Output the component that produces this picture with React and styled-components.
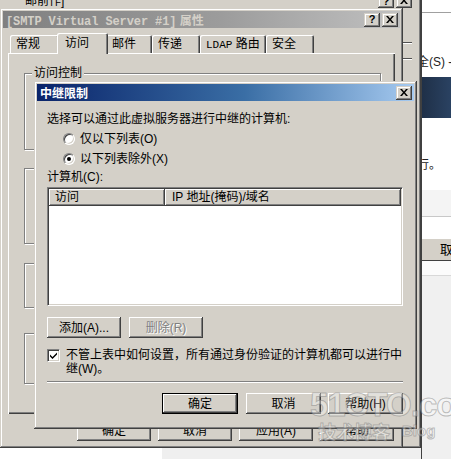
import React from 'react';
import styled, { createGlobalStyle, css } from 'styled-components';

const FONT = `"Liberation Sans", "Noto Sans CJK SC", sans-serif`;

const Global = createGlobalStyle`
  html, body { margin: 0; padding: 0; }
  body { font-family: ${FONT}; font-size: 12px; color: #000; }
  * { box-sizing: border-box; }
`;

const raised = css`
  background: #d4d0c8;
  box-shadow: inset -1px -1px 0 #404040, inset 1px 1px 0 #d4d0c8,
    inset -2px -2px 0 #808080, inset 2px 2px 0 #ffffff;
`;

const Desktop = styled.div`
  position: relative;
  width: 451px;
  height: 459px;
  overflow: hidden;
  background: linear-gradient(to right, #ffffff 162px, #efefef 162px);
`;

const Layer = styled.div`
  position: absolute;
  left: ${(p) => p.$x}px;
  top: ${(p) => p.$y}px;
  width: ${(p) => p.$w}px;
  height: ${(p) => p.$h}px;
`;

/* ---------- back window ---------- */
const BackWin = styled(Layer)`
  ${raised};
  display: flex;
  flex-direction: column;
  padding: 2px 9px 2px 2px;
`;
const BackTop = styled.div`
  height: 14px;
  display: flex;
  align-items: center;
  justify-content: space-between;
  padding-left: 27px;
  line-height: 14px;
`;
const BackRule = styled.div`
  margin-top: ${(p) => p.$mt}px;
  height: 2px;
  border-top: 1px solid #505050;
  border-bottom: 1px solid #ffffff;
`;

/* ---------- right window ---------- */
const RightWin = styled(Layer)`
  background: #ffffff;
  display: flex;
  flex-direction: column;
  overflow: hidden;
  border-left: 1px solid #404040;
`;
const Strip = styled.div`
  flex: none;
  height: ${(p) => p.$h}px;
  background: ${(p) => p.$bg || '#ffffff'};
  border-bottom: ${(p) => (p.$line ? `1px solid ${p.$line}` : 'none')};
  padding-top: ${(p) => p.$pt || 0}px;
  line-height: 14px;
  white-space: nowrap;
`;
const Clip = styled.span`
  display: inline-block;
  margin-left: ${(p) => p.$ml}px;
  color: #222;
`;
const SideBtn = styled.div`
  flex: none;
  height: 23px;
  background: #d4d0c8;
  border-top: 1px solid #ffffff;
  border-bottom: 1px solid #404040;
  padding-left: 18px;
  line-height: 21px;
  font-size: 13px;
  white-space: nowrap;
`;

/* ---------- generic window bits ---------- */
const Win = styled(Layer)`
  ${raised};
  display: flex;
  flex-direction: column;
  padding: 3px 3px 2px 3px;
`;
const TitleBar = styled.div`
  flex: none;
  height: 17px;
  display: flex;
  align-items: center;
  padding: 0 2px 0 3px;
  font-weight: bold;
  white-space: nowrap;
  color: ${(p) => (p.$active ? '#ffffff' : '#d4d0c8')};
  background: ${(p) =>
    p.$active
      ? 'linear-gradient(to right, #0a246a 0%, #3a6ea5 55%, #a6caf0 100%)'
      : 'linear-gradient(to right, #808080 0%, #9c9c9c 55%, #c0c0c0 100%)'};
`;
const TitleMono = styled.span`
  font-family: "Liberation Mono", "Noto Sans CJK SC", monospace;
  font-size: 12px;
  letter-spacing: -0.1px;
`;
const TitleText = styled.span`
  flex: 1;
  font-size: 12px;
`;
const CapGroup = styled.div`
  display: flex;
  gap: 2px;
`;
const CapBtn = styled.div`
  ${raised};
  width: 16px;
  height: 14px;
  display: flex;
  align-items: center;
  justify-content: center;
  padding-bottom: 1px;
  color: #000;
  font-weight: bold;
  font-size: 11px;
  line-height: 12px;
`;
const XIcon = () => (
  <svg width="8" height="7" viewBox="0 0 8 7">
    <path d="M0 0h2l2 2.4L6 0h2L5 3.5 8 7H6L4 4.6 2 7H0l3-3.5z" fill="#000" />
  </svg>
);

/* ---------- buttons ---------- */
const Btn = styled.div`
  flex: none;
  width: ${(p) => p.$w || 75}px;
  height: ${(p) => p.$h || 21}px;
  display: flex;
  align-items: center;
  justify-content: center;
  white-space: nowrap;
  background: #d4d0c8;
  font-size: 12px;
  color: ${(p) => (p.$disabled ? '#808080' : '#000')};
  text-shadow: ${(p) => (p.$disabled ? '1px 1px 0 #ffffff' : 'none')};
  box-shadow: ${(p) =>
    p.$default
      ? 'inset 0 0 0 1px #000, inset -2px -2px 0 #404040, inset 2px 2px 0 #ffffff, inset -3px -3px 0 #808080'
      : 'inset -1px -1px 0 #404040, inset 1px 1px 0 #ffffff, inset -2px -2px 0 #808080'};
`;

/* ---------- SMTP window ---------- */
const TabStrip = styled.div`
  flex: none;
  display: flex;
  align-items: flex-end;
  height: 20px;
  margin: 5px 0 0 7px;
`;
const Tab = styled.div`
  flex: none;
  width: ${(p) => p.$w}px;
  height: ${(p) => (p.$sel ? 21 : 18)}px;
  margin: ${(p) => (p.$sel ? '0 -2px -1px -2px' : '0')};
  padding-left: ${(p) => (p.$sel ? 8 : 6)}px;
  padding-top: ${(p) => (p.$sel ? 3 : 2)}px;
  line-height: 14px;
  white-space: nowrap;
  background: #d4d0c8;
  border-radius: 2px 2px 0 0;
  position: ${(p) => (p.$sel ? 'relative' : 'static')};
  z-index: ${(p) => (p.$sel ? 2 : 'auto')};
  box-shadow: inset 1px 1px 0 #ffffff, inset -1px 0 0 #404040,
    inset -2px 0 0 #808080;
`;
const TabMono = styled.span`
  font-family: "Liberation Mono", monospace;
  font-size: 11px;
`;
const TabPanel = styled.div`
  flex: none;
  width: 387px;
  height: 361px;
  margin-left: 5px;
  display: flex;
  flex-direction: column;
  padding: 20px 14px 0 16px;
  background: #d4d0c8;
  box-shadow: inset 1px 1px 0 #ffffff, inset -1px -1px 0 #404040,
    inset -2px -2px 0 #808080;
`;
const GroupBox = styled.div`
  flex: none;
  height: ${(p) => p.$h}px;
  margin-top: ${(p) => p.$mt || 0}px;
  border: 1px solid #808080;
  box-shadow: inset 1px 1px 0 #ffffff, 1px 1px 0 #ffffff;
`;
const Legend = styled.div`
  width: fit-content;
  margin: -8px 0 0 7px;
  padding: 0 2px;
  background: #d4d0c8;
  line-height: 14px;
`;
const MainButtons = styled.div`
  flex: none;
  display: flex;
  justify-content: flex-end;
  gap: 7px;
  margin-top: 4px;
  padding-right: 6px;
`;

/* ---------- relay dialog ---------- */
const DlgBody = styled.div`
  flex: 1;
  display: flex;
  flex-direction: column;
  padding: 11px 11px 0 10px;
  line-height: 14px;
`;
const Line = styled.div`
  margin-top: ${(p) => p.$mt || 0}px;
  white-space: nowrap;
`;
const RadioGroup = styled.div`
  margin-top: 3px;
  padding-left: 16px;
  display: flex;
  flex-direction: column;
`;
const RadioRow = styled.div`
  height: 20px;
  display: flex;
  align-items: center;
  gap: 5px;
  white-space: nowrap;
`;
const Radio = styled.div`
  width: 12px;
  height: 12px;
  border-radius: 50%;
  border: 1px solid;
  border-color: #808080 #ffffff #ffffff #808080;
  background: #ffffff;
  box-shadow: inset 1px 1px 0 #404040, inset -1px -1px 0 #d4d0c8;
  display: flex;
  align-items: center;
  justify-content: center;
  &::after {
    content: '';
    width: 4px;
    height: 4px;
    border-radius: 50%;
    background: ${(p) => (p.$on ? '#000' : 'transparent')};
  }
`;
const ListBox = styled.div`
  flex: none;
  margin-top: 3px;
  height: 119px;
  background: #ffffff;
  border: 1px solid;
  border-color: #808080 #ffffff #ffffff #808080;
  box-shadow: inset 1px 1px 0 #404040, inset -1px -1px 0 #d4d0c8;
  padding: 1px 1px 1px 1px;
`;
const ListHead = styled.div`
  display: flex;
  height: 17px;
`;
const HeadCell = styled.div`
  flex: ${(p) => (p.$w ? `0 0 ${p.$w}px` : '1')};
  padding-left: ${(p) => p.$pl}px;
  line-height: 16px;
  white-space: nowrap;
  background: #d4d0c8;
  box-shadow: inset -1px -1px 0 #404040, inset 1px 1px 0 #ffffff,
    inset -2px -2px 0 #808080;
`;
const BtnRow = styled.div`
  flex: none;
  display: flex;
  gap: ${(p) => p.$gap || 8}px;
  justify-content: ${(p) => (p.$end ? 'flex-end' : 'flex-start')};
  margin-top: ${(p) => p.$mt}px;
`;
const CheckRow = styled.div`
  display: flex;
  gap: 6px;
  margin-top: 10px;
`;
const CheckBox = styled.div`
  flex: none;
  width: 13px;
  height: 13px;
  margin-top: 1px;
  background: #ffffff;
  border: 1px solid;
  border-color: #808080 #ffffff #ffffff #808080;
  box-shadow: inset 1px 1px 0 #404040, inset -1px -1px 0 #d4d0c8;
  display: flex;
  align-items: center;
  justify-content: center;
`;
const CheckText = styled.div`
  width: 340px;
  line-height: 14px;
`;
const Separator = styled.div`
  margin-top: 5px;
  height: 2px;
  border-top: 1px solid #808080;
  border-bottom: 1px solid #ffffff;
`;

/* ---------- watermark ---------- */
const Watermark = styled.div`
  position: absolute;
  left: 310px;
  top: 388px;
  pointer-events: none;
  font-family: "Liberation Sans", "Noto Sans CJK SC", sans-serif;
  color: rgba(255, 255, 255, 0.35);
  -webkit-text-stroke: 1px rgba(120, 120, 120, 0.45);
  line-height: 1;
`;
const WmBig = styled.div`
  font-size: 33px;
  font-weight: bold;
  letter-spacing: -1px;
`;
const WmRow = styled.div`
  display: flex;
  align-items: flex-end;
  gap: 12px;
  margin-top: 2px;
  padding-left: 8px;
`;
const WmCn = styled.span`
  font-size: 18px;
  font-weight: bold;
`;
const WmEn = styled.span`
  font-size: 15px;
  font-weight: bold;
  padding-bottom: 4px;
`;

export default function App() {
  return (
    <Desktop>
      <Global />

      <BackWin $x={-4} $y={-8} $w={425} $h={456}>
        <BackTop>
          <span>邮前作]</span>
          <CapGroup>
            <CapBtn>?</CapBtn>
            <CapBtn>
              <XIcon />
            </CapBtn>
          </CapGroup>
        </BackTop>
        <BackRule $mt={34} />
        <BackRule $mt={14} />
      </BackWin>

      <RightWin $x={421} $y={0} $w={30} $h={459}>
        <Strip $h={13} $line="#a0a0a0" />
        <Strip $h={64} $pt={42}>
          <Clip $ml={-5}>全(S) -</Clip>
        </Strip>
        <Strip $h={41} $bg="linear-gradient(to right, #1f3048, #2a4262)" />
        <Strip $h={72} $pt={40}>
          <Clip $ml={-5}>行。</Clip>
        </Strip>
        <Strip $h={27} $bg="#f4f4f4" $line="#c8c8c8" />
        <Strip $h={21} $bg="#ffffff" />
        <SideBtn>取消</SideBtn>
        <Strip $h={15} $bg="#fbfbfb" $line="#d8d8d8" />
        <Strip $h={200} $bg="#f0f0f0" />
      </RightWin>

      <Win $x={0} $y={8} $w={403} $h={440}>
        <TitleBar>
          <TitleText>
            <TitleMono>[SMTP Virtual Server #1]</TitleMono> 属性
          </TitleText>
          <CapGroup>
            <CapBtn>?</CapBtn>
            <CapBtn>
              <XIcon />
            </CapBtn>
          </CapGroup>
        </TitleBar>
        <TabStrip>
          <Tab $w={49}>常规</Tab>
          <Tab $w={51} $sel>
            访问
          </Tab>
          <Tab $w={46}>邮件</Tab>
          <Tab $w={48}>传递</Tab>
          <Tab $w={66}>
            <TabMono>LDAP</TabMono> 路由
          </Tab>
          <Tab $w={48}>安全</Tab>
        </TabStrip>
        <TabPanel>
          <GroupBox $h={77}>
            <Legend>访问控制</Legend>
          </GroupBox>
          <GroupBox $h={76} $mt={18} />
          <GroupBox $h={45} $mt={19} />
          <GroupBox $h={51} $mt={25} />
        </TabPanel>
        <MainButtons>
          <Btn $w={74} $h={23}>确定</Btn>
          <Btn $w={74} $h={23}>取消</Btn>
          <Btn $w={74} $h={23}>应用(A)</Btn>
          <Btn $w={74} $h={23}>帮助</Btn>
        </MainButtons>
      </Win>

      <Win $x={34} $y={81} $w={383} $h={348}>
        <TitleBar $active>
          <TitleText>中继限制</TitleText>
          <CapBtn>
            <XIcon />
          </CapBtn>
        </TitleBar>
        <DlgBody>
          <Line>选择可以通过此虚拟服务器进行中继的计算机:</Line>
          <RadioGroup>
            <RadioRow>
              <Radio />
              <span>仅以下列表(O)</span>
            </RadioRow>
            <RadioRow>
              <Radio $on />
              <span>以下列表除外(X)</span>
            </RadioRow>
          </RadioGroup>
          <Line $mt={1}>计算机(C):</Line>
          <ListBox>
            <ListHead>
              <HeadCell $w={116} $pl={6}>
                访问
              </HeadCell>
              <HeadCell $pl={7}>IP 地址(掩码)/域名</HeadCell>
            </ListHead>
          </ListBox>
          <BtnRow $mt={11} $gap={8}>
            <Btn $w={74}>添加(A)...</Btn>
            <Btn $w={74} $disabled>
              删除(R)
            </Btn>
          </BtnRow>
          <CheckRow>
            <CheckBox>
              <svg width="7" height="7" viewBox="0 0 7 7">
                <path d="M0 2.5l2.5 2.5L7 0.5V2.5L2.5 7 0 4.5z" fill="#000" />
              </svg>
            </CheckBox>
            <CheckText>
              不管上表中如何设置，所有通过身份验证的计算机都可以进行中继(W)。
            </CheckText>
          </CheckRow>
          <Separator />
          <BtnRow $mt={10} $gap={7} $end>
            <Btn $w={76} $default style={{ marginRight: 1 }}>
              确定
            </Btn>
            <Btn $w={75}>取消</Btn>
            <Btn $w={75}>帮助(H)</Btn>
          </BtnRow>
        </DlgBody>
      </Win>

      <Watermark>
        <WmBig>51CTO.com</WmBig>
        <WmRow>
          <WmCn>技术博客</WmCn>
          <WmEn>Blog</WmEn>
        </WmRow>
      </Watermark>
    </Desktop>
  );
}
